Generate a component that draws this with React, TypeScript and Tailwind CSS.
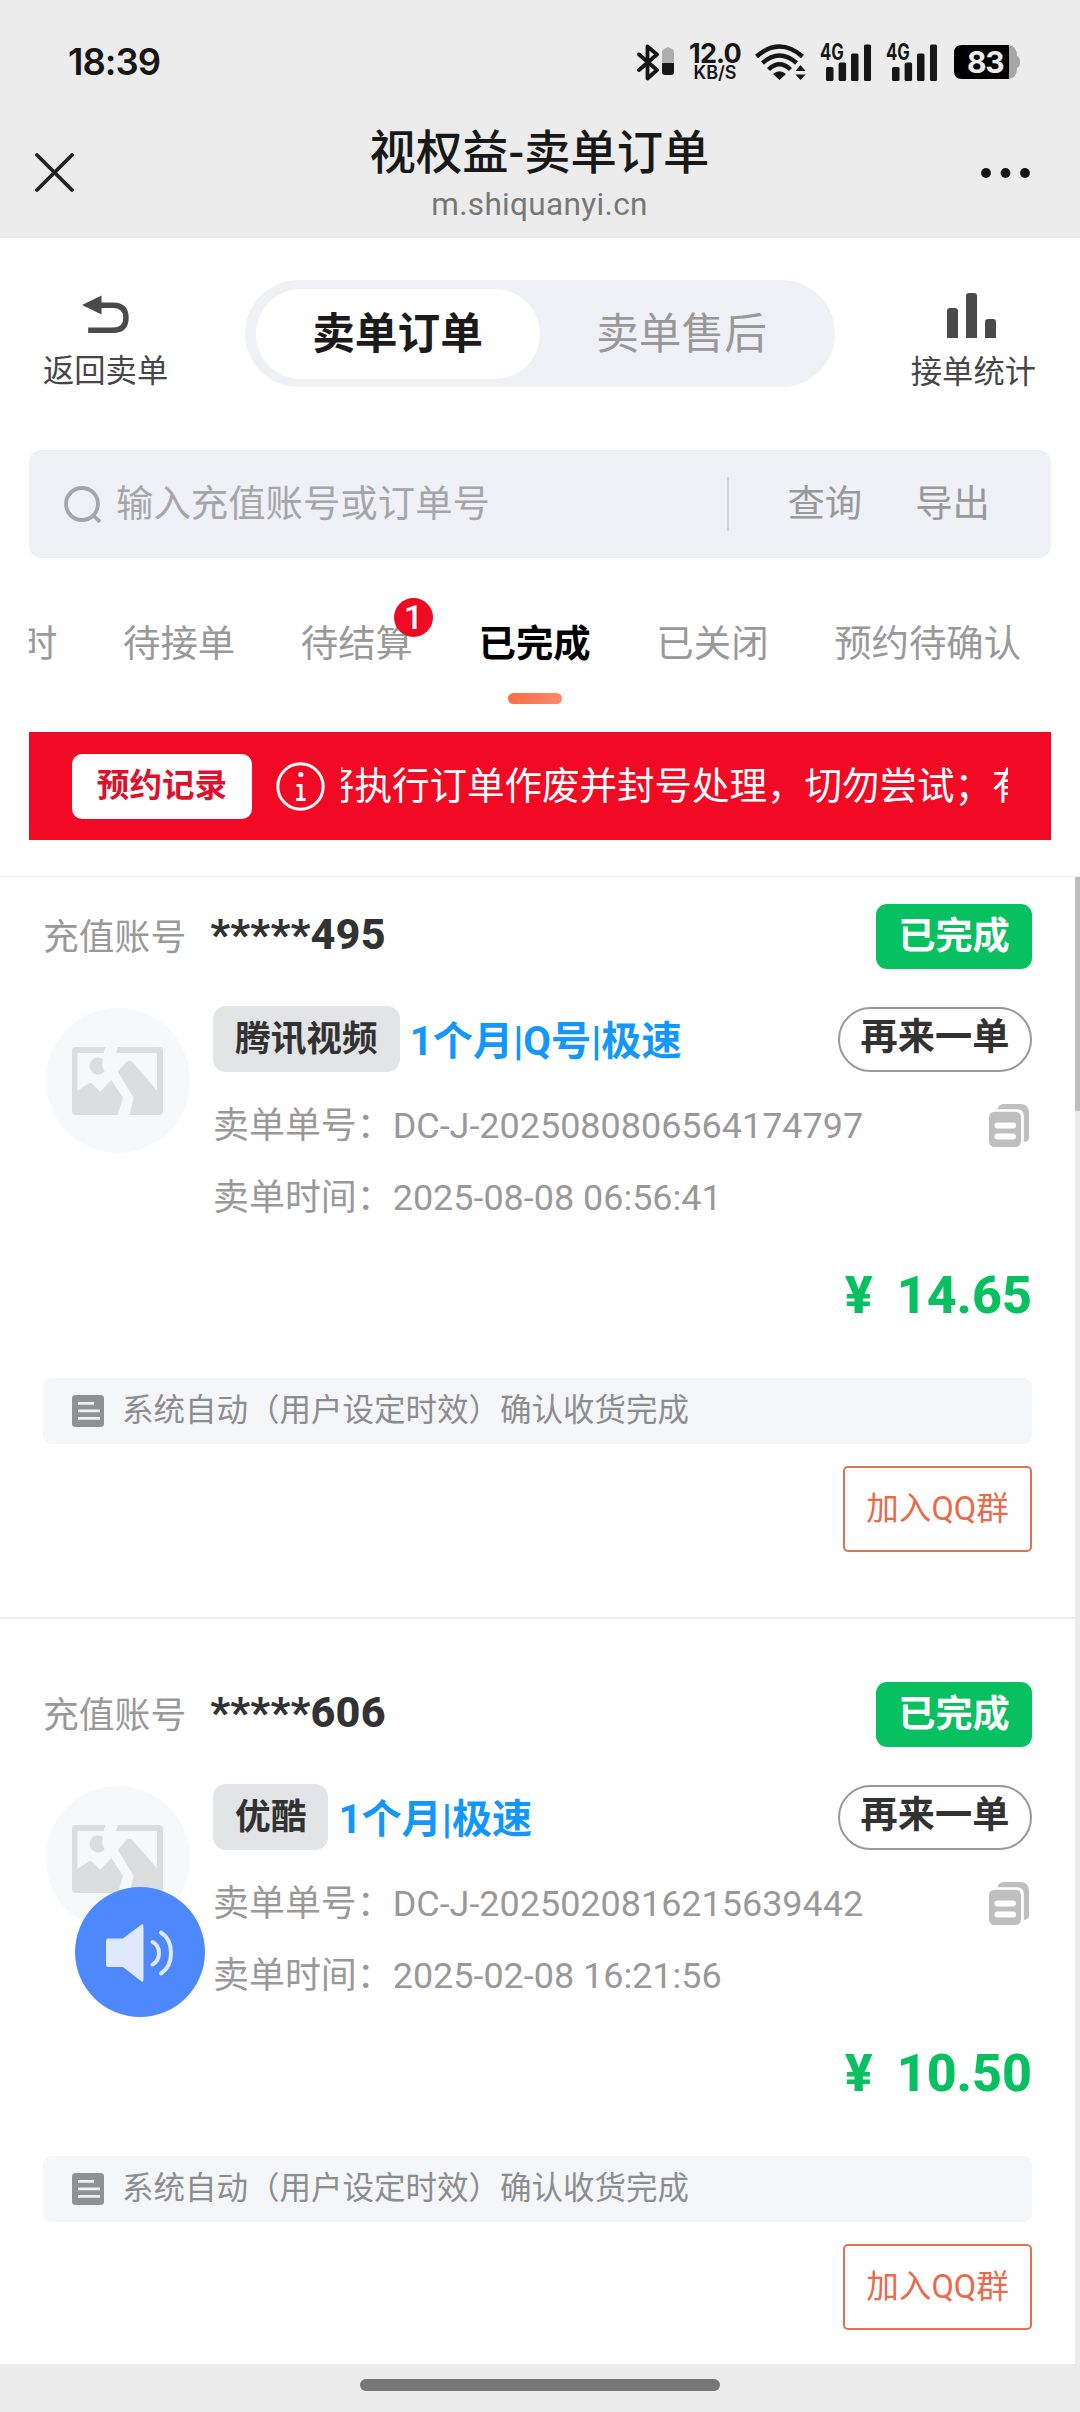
type Order = {
  account: string;
  brand: string;
  spec: string;
  orderNo: string;
  time: string;
  price: string;
};

const orders: Order[] = [
  {
    account: "*****495",
    brand: "腾讯视频",
    spec: "1个月|Q号|极速",
    orderNo: "DC-J-2025080806564174797",
    time: "2025-08-08 06:56:41",
    price: "14.65",
  },
  {
    account: "*****606",
    brand: "优酷",
    spec: "1个月|极速",
    orderNo: "DC-J-2025020816215639442",
    time: "2025-02-08 16:21:56",
    price: "10.50",
  },
];

const tabs = [
  { label: "时" },
  { label: "待接单" },
  { label: "待结算", badge: 1 },
  { label: "已完成", active: true },
  { label: "已关闭" },
  { label: "预约待确认" },
];

function Signal() {
  return (
    <div className="relative h-[37px] w-[51px]">
      <span className="absolute -top-px left-0 origin-left scale-x-[0.74] font-[Inter] text-[22.5px] leading-[18px] font-bold">
        4G
      </span>
      <svg className="absolute inset-0" width="51" height="37" viewBox="0 0 51 37" fill="#161616">
        <rect x="6" y="23" width="7.5" height="14" rx="1.5" />
        <rect x="18.6" y="18.5" width="7.5" height="18.5" rx="1.5" />
        <rect x="31" y="9.5" width="7.5" height="27.5" rx="1.5" />
        <rect x="44" y="0.5" width="7" height="36.5" rx="1.5" />
      </svg>
    </div>
  );
}

function StatusBar() {
  return (
    <div className="flex h-[124px] items-center pr-[60px] pl-[68px] text-[#161616]">
      <span className="font-[Inter] text-[36.5px] leading-[40px] font-semibold tracking-[-1px]">
        18:39
      </span>
      <div className="ml-auto flex items-center">
        <svg width="37" height="37" viewBox="0 0 37 37" fill="none">
          <path
            d="M2 10.5 L20 26 L10.5 34.5 V2.5 L20 10.5 L2 26"
            stroke="#161616"
            strokeWidth="3.8"
            strokeLinejoin="round"
            strokeLinecap="round"
          />
          <path d="M25 19 V8 Q25 5 28 4.5 L31 3 L34 4.5 Q37 5 37 8 V19 Z" fill="#adadad" />
          <path d="M25 19 H37 V28 Q37 31 34 31 H28 Q25 31 25 28 Z" fill="#161616" />
        </svg>
        <div className="ml-[14px] flex w-[54px] flex-col items-center font-[Inter] font-bold">
          <span className="text-[27px] leading-[21px] tracking-[-0.8px]">12.0</span>
          <span className="text-[18px] leading-[17px] font-semibold">KB/S</span>
        </div>
        <svg className="ml-[13px]" width="51" height="37" viewBox="0 0 51 37" fill="none">
          <g stroke="#161616" strokeWidth="4.4">
            <path d="M1.5 12.5 Q24.5 -7.5 47.5 12.5" />
            <path d="M7.5 19 Q24.5 4 41.5 19" />
            <path d="M13.5 25.5 Q24.5 15 35.5 25.5" />
          </g>
          <path d="M18 30 Q24.5 24.5 31 30 L24.5 36 Z" fill="#161616" />
          <path d="M40.5 27 L45.5 21 L50.5 27 Z M40.5 30.5 H50.5 L45.5 36 Z" fill="#161616" />
        </svg>
        <div className="ml-[14px]">
          <Signal />
        </div>
        <div className="ml-[15px]">
          <Signal />
        </div>
        <div className="relative ml-[17px] h-[34px] w-[66px]">
          <svg width="66" height="34" viewBox="0 0 66 34">
            <path d="M55 0 Q63 1 63 11 Q66 12 66 17 Q66 22 63 23 Q63 33 55 34 Z" fill="#a6a6a6" />
            <path d="M8 0 H55 V34 H8 Q0 34 0 26 V8 Q0 0 8 0 Z" fill="#000" />
          </svg>
          <span className="absolute top-0 left-[13px] font-[Inter] text-[30px] leading-[35px] font-bold tracking-[-1.4px] text-[#ececec]">
            83
          </span>
        </div>
      </div>
    </div>
  );
}

function TitleBar() {
  return (
    <div className="flex h-[114px] items-center justify-between pr-[50px] pl-[35px]">
      <svg className="-mt-[17px]" width="39" height="39" viewBox="0 0 39 39">
        <path d="M2 2 L37 37 M37 2 L2 37" stroke="#222" strokeWidth="3.8" strokeLinecap="round" />
      </svg>
      <div className="flex flex-col items-center pl-[24px]">
        <h1 className="text-[46.3px] leading-[58px] font-medium text-[#181818]">视权益-卖单订单</h1>
        <p className="pt-[3px] pb-[13px] text-[31.5px] leading-[40px] tracking-[0.35px] text-[#777]">
          m.shiquanyi.cn
        </p>
      </div>
      <svg className="-mt-[17px]" width="49" height="10" viewBox="0 0 49 10" fill="#161616">
        <circle cx="5" cy="5" r="4.9" />
        <circle cx="24.5" cy="5" r="4.9" />
        <circle cx="44" cy="5" r="4.9" />
      </svg>
    </div>
  );
}

function TopNav() {
  return (
    <div className="flex h-[107px] justify-between pr-[44px] pl-[43px] text-[31.3px] text-[#464646]">
      <div className="flex flex-col items-center pt-[15px]">
        <svg className="shrink-0" width="47" height="39" viewBox="0 0 47 39">
          <path d="M0 10 L19.5 0.5 V19.5 Z" fill="#4a4a4a" />
          <path
            d="M18 10.2 H31 Q44 10.2 44 22.7 Q44 35.3 31 35.3 H6.2"
            fill="none"
            stroke="#4a4a4a"
            strokeWidth="5.4"
          />
        </svg>
        <span className="mt-[18px] leading-[40px]">返回卖单</span>
      </div>
      <div className="flex h-[107px] w-[590px] items-center rounded-full bg-[#f0f1f7] px-[11px] text-[42.7px]">
        <div className="h-[90px] w-[284px] rounded-full bg-white text-center leading-[91px] font-bold text-[#1b1b1b]">
          卖单订单
        </div>
        <div className="h-[90px] w-[284px] text-center leading-[91px] text-[#999]">卖单售后</div>
      </div>
      <div className="flex flex-col items-center pt-[13px]">
        <svg className="-ml-[3px] shrink-0" width="49" height="45" viewBox="0 0 49 45" fill="#4a4a4a">
          <path d="M0 45 V18 Q0 15 3 15 H8 Q11 15 11 18 V45 Z" />
          <path d="M19 45 V3 Q19 0 22 0 H27 Q30 0 30 3 V45 Z" />
          <path d="M38 45 V29 Q38 26 41 26 H46 Q49 26 49 29 V45 Z" />
        </svg>
        <span className="mt-[15px] leading-[40px]">接单统计</span>
      </div>
    </div>
  );
}

function SearchBar() {
  return (
    <div className="mx-[29px] mt-[63px] flex h-[108px] items-center rounded-[12px] bg-[#f0f1f7] pl-[35px] text-[37.4px] leading-[54px] text-[#999]">
      <svg width="37" height="37" viewBox="0 0 37 37" fill="none" stroke="#a6a6a8" strokeWidth="3.8">
        <circle cx="18" cy="18" r="16" />
        <path d="M29 29 L36 36" />
      </svg>
      <span className="ml-[15px] text-[#a6a6a8]">输入充值账号或订单号</span>
      <div className="ml-auto h-[54px] w-[2px] bg-[#d2d2d6]" />
      <span className="ml-[58px]">查询</span>
      <span className="mr-[61px] ml-[53px]">导出</span>
    </div>
  );
}

function Tabs() {
  return (
    <div className="mx-[29px] mt-[24px] h-[150px] overflow-hidden text-[37.4px] text-[#999]">
      <div className="-ml-[9px] flex w-max gap-[65.6px] pt-[35px]">
        {tabs.map((tab) => (
          <div key={tab.label} className="relative flex flex-col items-center leading-[54px]">
            <span className={tab.active ? "font-bold text-black" : ""}>{tab.label}</span>
            {tab.active && (
              <div className="mt-[22px] h-[11px] w-[54px] rounded-full bg-linear-to-r from-[#ff6a48] to-[#ff8866]" />
            )}
            {tab.badge && (
              <span className="absolute -top-[19px] -right-[20px] h-[39px] w-[39px] rounded-full bg-[#ee0a24] text-center font-[Roboto] text-[34px] leading-[39px] font-medium text-white">
                {tab.badge}
              </span>
            )}
          </div>
        ))}
      </div>
    </div>
  );
}

function NoticeBar() {
  return (
    <div className="mx-[29px] flex h-[108px] items-center bg-[#f20a24] pr-[43px] pl-[43px]">
      <div className="h-[65px] w-[180px] shrink-0 rounded-[10px] bg-white text-center text-[32.6px] leading-[65px] font-bold text-[#e0102c]">
        预约记录
      </div>
      <svg className="ml-[24px] shrink-0" width="49" height="49" viewBox="0 0 49 49" fill="none">
        <circle cx="24.5" cy="24.5" r="22.7" stroke="#fff" strokeWidth="3" />
        <circle cx="24.8" cy="12.5" r="2.6" fill="#fff" />
        <path d="M20.5 23.5 H25 V37 M20 37.5 H29.6" stroke="#fff" strokeWidth="3" />
      </svg>
      <div className="ml-[16px] flex-1 overflow-hidden">
        <p className="-ml-[24px] w-max pb-px text-[37.5px] leading-[54px] text-white">
          将执行订单作废并封号处理，切勿尝试；有
        </p>
      </div>
    </div>
  );
}

function BrokenImage() {
  return (
    <svg className="-ml-[2px]" width="91" height="68" viewBox="0 0 91 68" fill="#dcdddf">
      <path d="M4 0 H33.4 L31.5 6 H5.5 V43.7 L16 36.8 Q18.2 35 20.4 37 L28.2 44.7 L39.3 33 L51 50.7 L45.8 68 H4 Q0 68 0 64 V4 Q0 0 4 0 Z" />
      <path d="M31 12 L29.8 18.5 L32.7 24.5 A8.6 8.6 0 1 1 31 12 Z" />
      <path d="M45.8 0 H87 Q91 0 91 4 V64 Q91 68 87 68 H57.5 L61.6 50.7 L45.8 24.7 L54.5 15 Q57.5 12.5 60.4 15 L85 43.5 V6 H44 Z" />
    </svg>
  );
}

function CopyIcon() {
  return (
    <svg width="40" height="43" viewBox="0 0 40 43" fill="#bfbfbf">
      <path d="M8.3 5.3 Q10 0 15 0 H31 Q40 0 40 9 V35 Q39 37.6 34.8 38 V12 Q34.8 5.3 28 5.3 Z" />
      <rect y="7.7" width="32" height="35.3" rx="5.5" />
      <rect x="5.5" y="18.5" width="21.5" height="6" rx="3" fill="#fff" />
      <rect x="5.5" y="29.5" width="21.5" height="6" rx="3" fill="#fff" />
    </svg>
  );
}

function NoteIcon() {
  return (
    <svg width="32" height="32" viewBox="0 0 32 32">
      <rect width="32" height="32" rx="3.5" fill="#909193" />
      <path d="M6 8.3 H22 M6 15.8 H28 M6 23.3 H28" stroke="#f0f1f3" strokeWidth="2.8" />
    </svg>
  );
}

function OrderCard({ order }: { order: Order }) {
  return (
    <article className="px-[43px] pt-[27px]">
      <div className="flex h-[65px] items-center">
        <span className="pt-[2px] text-[35.8px] leading-[50px] text-[#999]">充值账号</span>
        <span className="ml-[24px] pb-[4px] text-[43.2px] leading-[50px] font-extrabold tracking-[0.2px] text-[#323233]">
          {order.account}
        </span>
        <div className="ml-auto h-[65px] w-[156px] rounded-[11px] bg-[#07c160] text-center text-[37.2px] leading-[64px] font-bold text-white">
          已完成
        </div>
      </div>

      <div className="mt-[37px] flex pl-[3px]">
        <div className="mt-[2px] flex h-[145px] w-[144px] items-center justify-center rounded-full bg-[#f7f8fa]">
          <BrokenImage />
        </div>
        <div className="ml-[23px] flex-1 text-[35.95px] leading-[74px] text-[#999]">
          <div className="flex h-[66px] items-center">
            <span className="h-[66px] rounded-[13px] bg-[#e3e4e6] px-[22px] text-[35.7px] leading-[67px] font-bold text-[#323233]">
              {order.brand}
            </span>
            <span className="ml-[10px] pt-[5px] text-[40.2px] leading-[66px] font-bold text-[#1298fc]">{order.spec}</span>
            <button className="ml-auto h-[65px] w-[194px] rounded-full border-2 border-[#999] pb-[4px] text-[37.2px] leading-[57px] font-bold text-[#323233]">
              再来一单
            </button>
          </div>
          <div className="mt-[17px] flex h-[72px] items-center justify-between pr-[3px]">
            <span className="h-[72px]">卖单单号：{order.orderNo}</span>
            <CopyIcon />
          </div>
          <div className="h-[72px]">卖单时间：{order.time}</div>
        </div>
      </div>

      <div className="mt-[31px] flex h-[60px] items-center justify-end pt-[3px] text-[52px] leading-[60px] font-extrabold text-[#07c160]">
        <span>¥</span>
        <span className="ml-[24px]">{order.price}</span>
      </div>

      <div className="mt-[54px] flex h-[66px] items-center rounded-[9px] bg-[#f5f6f8] pl-[29px]">
        <NoteIcon />
        <span className="ml-[18px] text-[31.5px] leading-[60px] text-[#8c8d8f]">
          系统自动（用户设定时效）确认收货完成
        </span>
      </div>

      <div className="mt-[22px] flex justify-end">
        <button className="h-[86px] w-[189px] rounded-[5px] border-2 border-[#e2714f] text-[32.6px] leading-[80px] text-[#ea6a4b]">
          加入QQ群
        </button>
      </div>
    </article>
  );
}

export default function App() {
  return (
    <div className="relative flex h-[2412px] w-[1080px] flex-col overflow-hidden bg-white font-[Roboto,'Noto_Sans_CJK_SC',sans-serif]">
      <header className="bg-[#ececec]">
        <StatusBar />
        <TitleBar />
      </header>

      <div className="pt-[42px]">
        <TopNav />
        <SearchBar />
        <Tabs />
        <NoticeBar />
      </div>

      <main className="mt-[36px] flex flex-1 border-t border-[#f0f0f0]">
        <div className="flex-1">
          <OrderCard order={orders[0]} />
          <div className="mt-[65px] mb-[36px] h-[2px] bg-[#eeeeee]" />
          <OrderCard order={orders[1]} />
        </div>
        <div className="w-[5px] bg-[#ebebeb]">
          <div className="h-[234px] bg-[#bdbdbd]" />
        </div>
      </main>

      <footer className="flex h-[48px] justify-center bg-[#ececec] pt-[15px]">
        <div className="h-[12px] w-[360px] rounded-full bg-[#777]" />
      </footer>

      {/* floating voice button */}
      <button className="absolute top-[1887px] left-[75px] flex h-[130px] w-[130px] items-center justify-center rounded-full bg-[#4d88ff]">
        <svg width="130" height="130" viewBox="0 0 130 130" fill="none">
          <path
            d="M33 51.5 H48 L66.5 37.5 Q68.5 36.5 68.5 39 V93 Q68.5 95.5 66.5 94.5 L48 80 H33 Q31 80 31 78 V53.5 Q31 51.5 33 51.5 Z"
            fill="#e0e8fb"
          />
          <path d="M77.5 55 Q84 58 84 66 Q84 74 77.5 77.5" stroke="#e0e8fb" strokeWidth="4" strokeLinecap="round" />
          <path d="M86 45.5 Q96 52 96 66 Q96 80 86 86.5" stroke="#e0e8fb" strokeWidth="4" strokeLinecap="round" />
        </svg>
      </button>
    </div>
  );
}
